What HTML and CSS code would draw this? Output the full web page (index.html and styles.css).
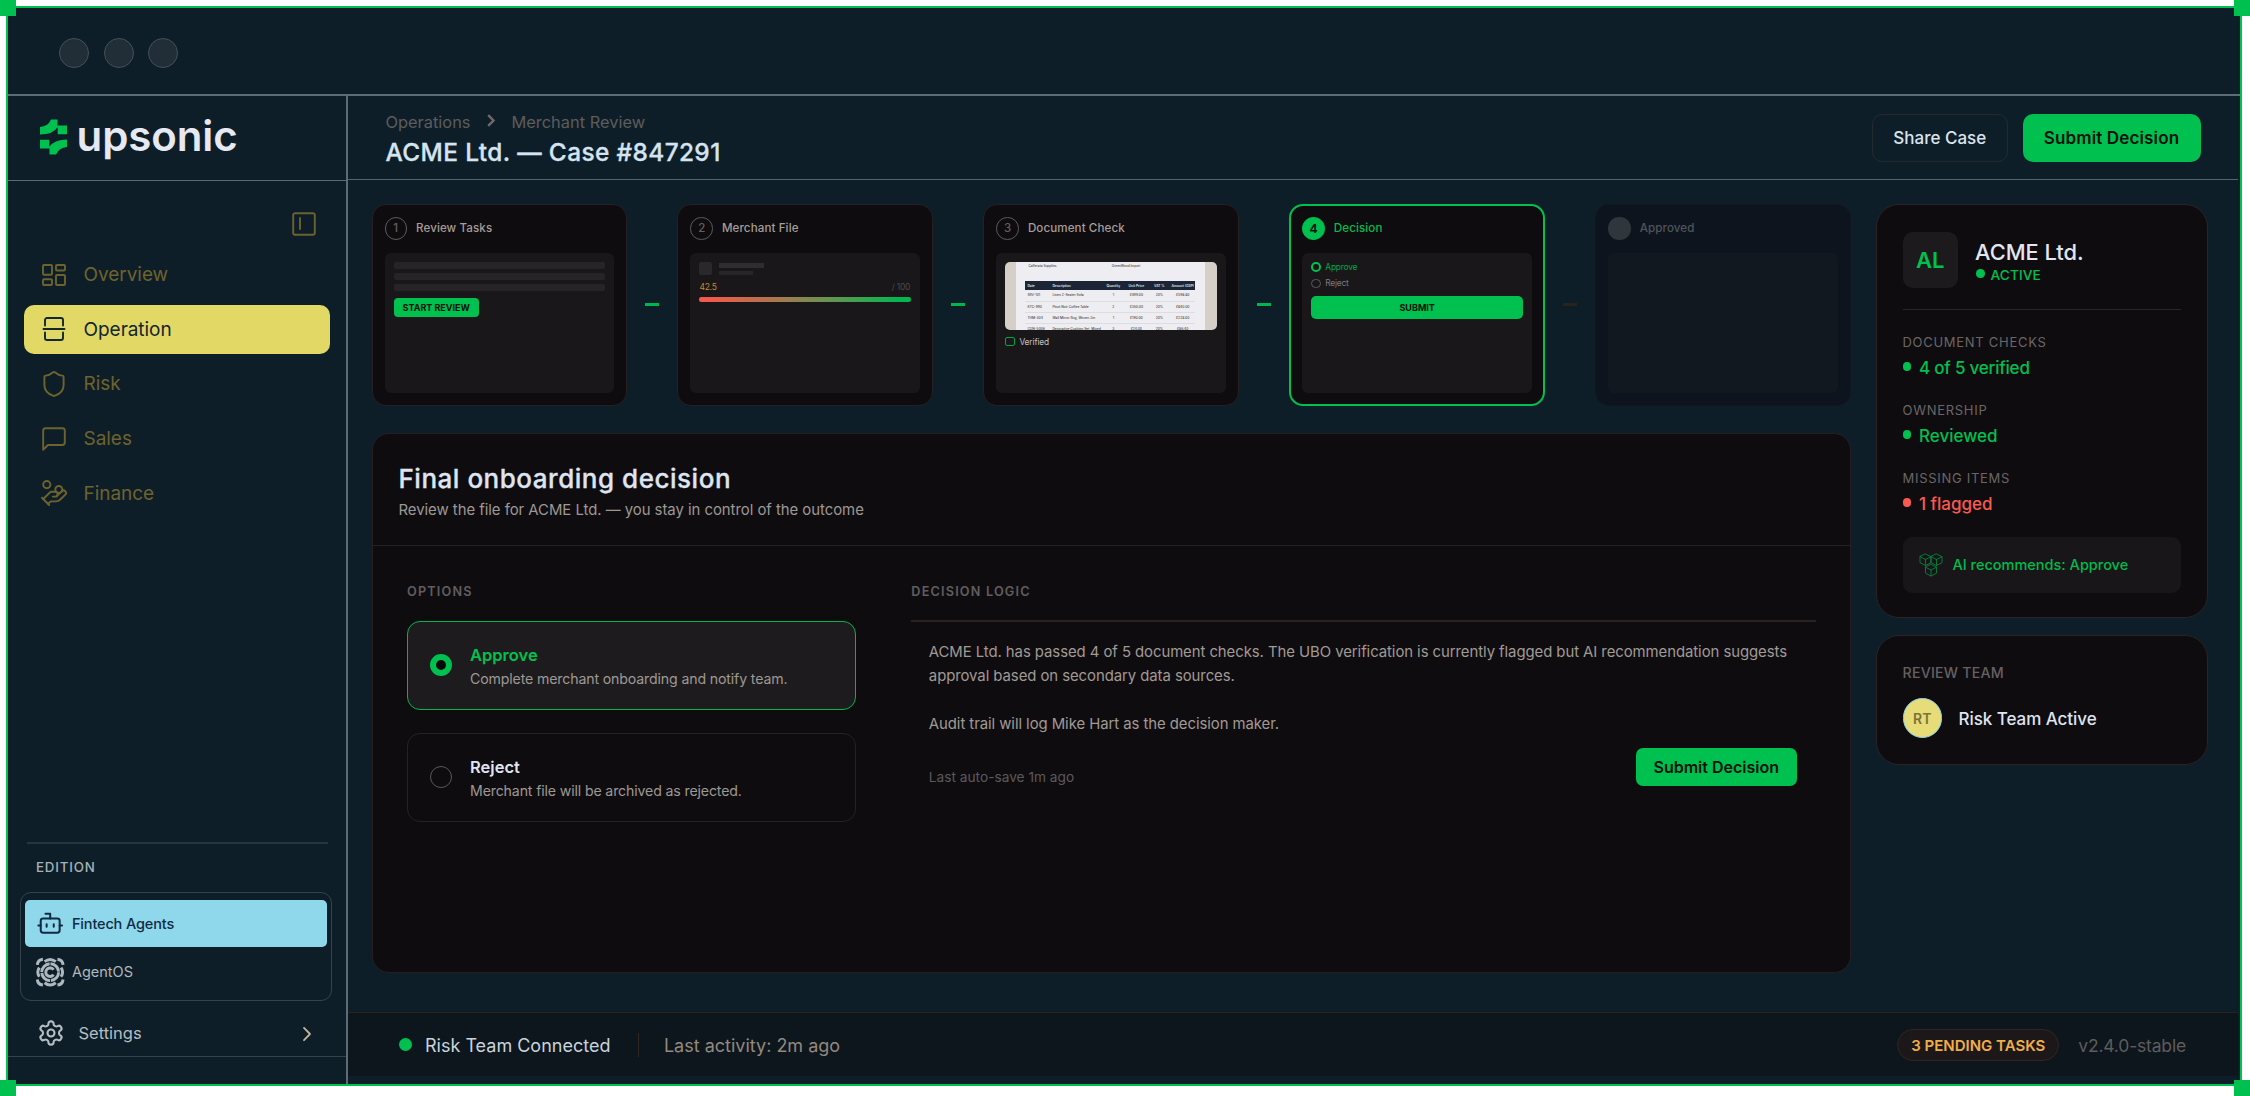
FILE: index.html
```html
<!DOCTYPE html>
<html lang="en">
<head>
<meta charset="utf-8">
<title>Upsonic — Case #847291</title>
<link rel="stylesheet" href="styles.css">
</head>
<body>
<div class="frame">
  <i class="handle tl"></i><i class="handle tr"></i><i class="handle bl"></i><i class="handle br"></i>
  <div class="chrome"><i></i><i></i><i></i></div>
  <div class="app">
    <aside class="sidebar">
      <div class="logo">
        <svg width="27" height="36" viewBox="0 0 27 36"><path fill="#00c04f" d="M0 8Q8 7.5 11 .5H17.5V6.5H27V15.3H17.7V8Q13 15.5 0 15.5ZM27 28Q19 28.5 16 35.5H9.5V29.5H0V20.7H9.3V28Q14 20.5 27 20.5Z"/></svg>
        <span>upsonic</span>
      </div>
      <div class="toggle">
        <svg width="24" height="24" viewBox="0 0 24 24"><rect x="1.2" y="1.2" width="21.6" height="21.6" rx="2"/><path d="M8 6v11"/></svg>
      </div>
      <nav class="nav">
        <a><svg viewBox="0 0 24 24"><rect x="1" y="2" width="9" height="9.7" rx="1"/><rect x="14" y="2" width="9" height="5.5" rx="1"/><rect x="14" y="12" width="9" height="10" rx="1"/><rect x="1" y="16.3" width="9" height="5.7" rx="1"/></svg>Overview</a>
        <a class="on"><svg viewBox="0 0 24 24"><path d="M3 8.500V3a2 2 0 0 1 2-2h14a2 2 0 0 1 2 2v5.500M1.500 12h21M3 15.500V21a2 2 0 0 0 2 2h14a2 2 0 0 0 2-2v-5.500"/></svg>Operation</a>
        <a><svg class="l" viewBox="2 2 20 20"><path d="M20 13c0 5-3.500 7.500-7.660 8.950a1 1 0 0 1-.67-.01C7.500 20.500 4 18 4 13V6a1 1 0 0 1 1-1c2 0 4.500-1.200 6.240-2.720a1.170 1.170 0 0 1 1.520 0C14.510 3.810 17 5 19 5a1 1 0 0 1 1 1z"/></svg>Risk</a>
        <a><svg class="l" viewBox="2 2 20 20"><path d="M21 15a2 2 0 0 1-2 2H7l-4 4V5a2 2 0 0 1 2-2h14a2 2 0 0 1 2 2z"/></svg>Sales</a>
        <a><svg class="l" viewBox="2 2 20 20"><path d="M11 15h2a2 2 0 1 0 0-4h-3c-.6 0-1.100.2-1.400.6L3 17"/><path d="m7 21 1.600-1.400c.3-.4.8-.6 1.400-.6h4c1.100 0 2.100-.4 2.800-1.200l4.600-4.400a2 2 0 0 0-2.750-2.910l-4.200 3.900"/><path d="m2 16 6 6"/><circle cx="16" cy="9" r="2.900"/><circle cx="6" cy="5" r="3"/></svg>Finance</a>
      </nav>
      <div class="side-foot">
        <div class="edition">EDITION</div>
        <div class="switch">
          <a class="on"><svg viewBox="0 0 24 24"><path d="M12 8V4H8"/><rect width="16" height="12" x="4" y="8" rx="2"/><path d="M2 14h2M20 14h2M15 13v2M9 13v2"/></svg>Fintech Agents</a>
          <a><svg class="os" viewBox="0 0 28 28"><path d="M17.300 11.600a4.200 4.200 0 1 0 0 4.800"/><circle cx="14" cy="14" r="8.300" stroke-dasharray="12.150 .89"/><path d="M8.500 3.600Q14-.8 19.500 3.600M8.500 24.400Q14 28.800 19.500 24.400M3.300 9.500Q.2 14 3.300 18.500M24.700 9.500Q27.800 14 24.700 18.500"/><path d="M1.300 6.800Q1.800 1.800 6.800 1.300M21.200 1.300Q26.200 1.800 26.700 6.800M26.700 21.200Q26.200 26.200 21.200 26.700M6.800 26.700Q1.800 26.200 1.300 21.200"/></svg>AgentOS</a>
        </div>
        <div class="settings">
          <svg width="28" height="28" viewBox="0 0 24 24"><path d="M12.220 2h-.44a2 2 0 0 0-2 2v.18a2 2 0 0 1-1 1.730l-.43.25a2 2 0 0 1-2 0l-.15-.08a2 2 0 0 0-2.730.73l-.22.38a2 2 0 0 0 .73 2.730l.15.1a2 2 0 0 1 1 1.720v.51a2 2 0 0 1-1 1.740l-.15.09a2 2 0 0 0-.73 2.730l.22.38a2 2 0 0 0 2.730.73l.15-.08a2 2 0 0 1 2 0l.43.25a2 2 0 0 1 1 1.730V20a2 2 0 0 0 2 2h.44a2 2 0 0 0 2-2v-.18a2 2 0 0 1 1-1.730l.43-.25a2 2 0 0 1 2 0l.15.08a2 2 0 0 0 2.730-.73l.22-.39a2 2 0 0 0-.73-2.730l-.15-.08a2 2 0 0 1-1-1.740v-.5a2 2 0 0 1 1-1.740l.15-.09a2 2 0 0 0 .73-2.730l-.22-.38a2 2 0 0 0-2.730-.73l-.15.08a2 2 0 0 1-2 0l-.43-.25a2 2 0 0 1-1-1.730V4a2 2 0 0 0-2-2z"/><circle cx="12" cy="12" r="3"/></svg>
          <span>Settings</span>
          <svg class="chev" width="8" height="14" viewBox="0 0 8 14"><path d="M1 .8 7 7l-6 6.200"/></svg>
        </div>
      </div>
    </aside>

    <main class="main">
      <header class="top">
        <div class="heading">
          <div class="crumbs"><span>Operations</span><svg width="8" height="13" viewBox="0 0 8 13"><path d="M1.200 1.200 6.500 6.500l-5.300 5.300"/></svg><span>Merchant Review</span></div>
          <h1>ACME Ltd. — Case #847291</h1>
        </div>
        <button class="btn ghost">Share Case</button>
        <button class="btn">Submit Decision</button>
      </header>

      <div class="content">
        <div class="work">
          <div class="steps">
            <section class="step">
              <h3><b>1</b>Review Tasks</h3>
              <div class="thumb"><div class="bars"><i></i><i></i><i></i></div><span class="mini start">START REVIEW</span></div>
            </section>
            <i class="link"></i>
            <section class="step">
              <h3><b>2</b>Merchant File</h3>
              <div class="thumb">
                <div class="who"><i class="sq"></i><div><i></i><i></i></div></div>
                <div class="score"><span>42.5</span><span>/ 100</span></div>
                <div class="meter"></div>
              </div>
            </section>
            <i class="link"></i>
            <section class="step">
              <h3><b>3</b>Document Check</h3>
              <div class="thumb">
                <div class="photo"><div class="paper">
                  <div class="meta"><span>Cafferata Supplies</span><span>GreenWood Import</span></div>
                  <table>
                    <tr><th>Date</th><th>Description</th><th>Quantity</th><th>Unit Price</th><th>VAT %</th><th>Amount (GBP)</th></tr>
                    <tr><td>SRV-101</td><td>Linen 2-Seater Sofa</td><td>1</td><td>£499.00</td><td>20%</td><td>£598.80</td></tr>
                    <tr><td>KTC-990</td><td>Pinot Noir Coffee Table</td><td>2</td><td>£350.00</td><td>20%</td><td>£840.00</td></tr>
                    <tr><td>THM-304</td><td>Wall Mirror Rug, Woven 2m</td><td>1</td><td>£190.00</td><td>20%</td><td>£228.00</td></tr>
                    <tr><td>CON-5006</td><td>Decorative Cushion Set, Mixed</td><td>3</td><td>£24.00</td><td>20%</td><td>£86.40</td></tr>
                  </table>
                </div></div>
                <div class="check"><i></i>Verified</div>
              </div>
            </section>
            <i class="link"></i>
            <section class="step active">
              <h3><b>4</b>Decision</h3>
              <div class="thumb">
                <div class="pick yes"><i></i>Approve</div>
                <div class="pick"><i></i>Reject</div>
                <span class="mini submit">SUBMIT</span>
              </div>
            </section>
            <i class="link off"></i>
            <section class="step off">
              <h3><b></b>Approved</h3>
              <div class="thumb"></div>
            </section>
          </div>

          <section class="panel">
            <div class="panel-head">
              <h2>Final onboarding decision</h2>
              <p>Review the file for ACME Ltd. — you stay in control of the outcome</p>
            </div>
            <div class="panel-body">
              <div class="options">
                <div class="label">OPTIONS</div>
                <div class="option sel"><i></i><div><strong>Approve</strong><p>Complete merchant onboarding and notify team.</p></div></div>
                <div class="option"><i></i><div><strong>Reject</strong><p>Merchant file will be archived as rejected.</p></div></div>
              </div>
              <div class="logic">
                <div class="label">DECISION LOGIC</div>
                <div class="logic-box">
                  <p>ACME Ltd. has passed 4 of 5 document checks. The UBO verification is currently flagged but AI recommendation suggests<br>approval based on secondary data sources.</p>
                  <p>Audit trail will log Mike Hart as the decision maker.</p>
                  <div class="logic-foot"><span>Last auto-save 1m ago</span><button class="btn small">Submit Decision</button></div>
                </div>
              </div>
            </div>
          </section>
        </div>

        <aside class="info">
          <section class="card merchant">
            <div class="id">
              <div class="badge">AL</div>
              <div><div class="name">ACME Ltd.</div><div class="state"><i></i>ACTIVE</div></div>
            </div>
            <dl>
              <div><dt>DOCUMENT CHECKS</dt><dd class="tight"><i></i>4 of 5 verified</dd></div>
              <div><dt>OWNERSHIP</dt><dd><i></i>Reviewed</dd></div>
              <div><dt>MISSING ITEMS</dt><dd class="bad"><i></i>1 flagged</dd></div>
            </dl>
            <div class="ai">
              <svg width="24" height="24" viewBox="0 0 24 24"><path d="M6.500 1l5.500 2.700v6L6.500 12.500 1 9.700v-6zM1 3.700l5.500 2.800L12 3.700M6.500 6.500v6M17.500 1 23 3.700v6l-5.500 2.800L12 9.700v-6zM12 3.700l5.500 2.800L23 3.700M17.500 6.500v6M12 11.500l5.500 2.700v6L12 23l-5.500-2.800v-6zM6.500 14.200 12 17l5.500-2.800M12 17v6"/></svg>
              AI recommends: Approve
            </div>
          </section>
          <section class="card team">
            <div class="team-label">REVIEW TEAM</div>
            <div class="member"><i>RT</i><span>Risk Team Active</span></div>
          </section>
        </aside>
      </div>

      <footer class="status">
        <i class="dot"></i><span class="conn">Risk Team Connected</span><i class="sep"></i><span class="act">Last activity: 2m ago</span>
        <span class="pending">3 PENDING TASKS</span><span class="ver">v2.4.0-stable</span>
      </footer>
    </main>
  </div>
</div>
</body>
</html>
```
FILE: styles.css
```css
* { box-sizing: border-box; margin: 0; padding: 0; }
body { width: 2250px; height: 1096px; overflow: hidden; background: #fff; font-family: Inter, "Liberation Sans", sans-serif; color: #dbe4ee; }
i { font-style: normal; display: block; flex: none; }
svg { display: block; flex: none; fill: none; stroke: currentColor; stroke-linecap: round; stroke-linejoin: round; overflow: visible; }
a { white-space: nowrap; }

.frame { position: relative; width: 2236px; height: 1080px; margin: 6px 0 0 6px; border: 2px solid #00c04f; background: #0e1e28; display: flex; flex-direction: column; }
.handle { position: absolute; width: 16px; height: 16px; background: #00c04f; z-index: 2; }
.tl { left: -8px; top: -8px; }
.tr { right: -10px; top: -8px; }
.bl { left: -8px; bottom: -12px; }
.br { right: -10px; bottom: -12px; }

.chrome { flex: none; height: 88px; border-bottom: 2px solid #5c6b74; display: flex; align-items: center; gap: 14.7px; padding: 4px 0 0 51px; }
.chrome i { width: 30px; height: 30px; border-radius: 50%; background: #212e38; border: 1px solid #44505a; }

.app { flex: 1; display: flex; min-height: 0; }

/* Sidebar */
.sidebar { width: 340px; border-right: 2px solid #5c6b74; display: flex; flex-direction: column; }
.logo { height: 85px; border-bottom: 1px solid #5c6b74; padding: 0 0 2px 32px; display: flex; align-items: center; gap: 9.5px; }
.logo svg { stroke: none; }
.logo span { font-size: 42px; font-weight: 600; line-height: 42px; letter-spacing: -.002em; color: #e6e9f2; margin-top: -3px; }
.toggle { height: 69px; padding: 16px 30px 0 0; display: flex; justify-content: flex-end; align-items: center; color: #6d622f; }
.toggle svg { stroke-width: 1.9; }
.nav { display: flex; flex-direction: column; gap: 5px; padding: 0 16px; }
.nav a { height: 49.6px; border-radius: 10px; padding-left: 18px; display: flex; align-items: center; gap: 17.5px; font-size: 19px; letter-spacing: -.002em; color: #6d632f; }
.nav svg { width: 24px; height: 24px; stroke-width: 1.9; }
.nav svg.l { stroke-width: 1.6; }
.nav .on { background: #e2d866; color: #14262e; }
.side-foot { margin-top: auto; }
.edition { margin: 0 18px 0 19px; border-top: 2px solid #26363f; height: 50px; padding-left: 9px; line-height: 47px; font-size: 13.3px; font-weight: 500; letter-spacing: .062em; color: #a7b2b8; }
.switch { margin: 0 14px 0 12px; height: 109px; border: 1px solid #34434d; border-radius: 11px; padding: 7px 4px 0; }
.switch a { display: flex; align-items: center; height: 50.5px; padding-left: 10.5px; gap: 8px; font-size: 14.5px; color: #aeb8bf; }
.switch svg { width: 28.4px; height: 28.4px; stroke-width: 1.7; }
.switch .on { height: 46.5px; border-radius: 5px; background: #8fd7eb; color: #0f2b44; font-weight: 500; letter-spacing: -.01em; }
.switch .os { stroke-width: 2.9; stroke-linecap: butt; }
.settings { display: flex; align-items: center; height: 56px; padding: 8px 35px 0 29px; border-bottom: 1px solid #34434d; margin-bottom: 27px; color: #b4bdc3; font-size: 16.5px; }
.settings span { margin: 0 auto 0 13.5px; }
.settings svg { stroke-width: 1.8; }
.settings .chev { color: #c4b29b; margin-top: 2px; }

/* Header */
.main { flex: 1; min-width: 0; display: flex; flex-direction: column; }
.top { height: 84px; flex: none; border-bottom: 1px solid #56646d; padding: 16px 37.5px 0 37.5px; display: flex; align-items: flex-start; gap: 15px; margin-right: 2px; }
.heading { margin-right: auto; }
.crumbs { display: flex; align-items: center; gap: 16.5px; font-size: 16.4px; line-height: 20px; color: #5d5c5e; }
.crumbs svg { stroke-width: 2.4; color: #706a6b; stroke-linecap: butt; stroke-linejoin: miter; margin-top: -3px; }
h1 { margin-top: 4.5px; font-size: 24.4px; font-weight: 500; line-height: 30px; letter-spacing: .016em; color: #d5e4f0; -webkit-text-stroke: .3px #d5e4f0; }
.btn { font: 600 17px/1 Inter, sans-serif; border: 0; background: #00c04f; color: #04120a; border-radius: 10px; height: 48px; width: 178px; margin-top: 2px; letter-spacing: .008em; text-align: center; padding-top: 1px; }
.btn.ghost { width: 135.5px; background: none; border: 1px solid #232a2d; color: #dbe4ee; font-weight: 500; letter-spacing: 0; }
.btn.small { width: 161.5px; height: 38.5px; border-radius: 7px; font-size: 16px; letter-spacing: 0; margin: 0; }

/* Steps */
.content { flex: 1; display: flex; gap: 24.5px; padding: 23.5px 32px 0 23.5px; }
.work { width: 1479.5px; }
.steps { display: flex; align-items: center; height: 202.5px; }
.step { width: 255.7px; height: 202.5px; border: 1px solid #252021; border-radius: 14px; background: #0f0c0f; padding: 12.5px 12px 0; }
.step h3 { display: flex; align-items: center; gap: 9px; font-size: 11.6px; font-weight: 500; line-height: 22px; height: 22.5px; letter-spacing: .008em; color: #a59e9a; }
.step h3 b { width: 22.5px; height: 22.5px; border-radius: 50%; border: 1.3px solid #5e5b5d; color: #625f61; text-align: center; line-height: 21px; font-weight: 500; font-size: 11.5px; letter-spacing: 0; }
.thumb { margin-top: 13.5px; height: 139.5px; border-radius: 6px; background: #191719; padding: 9px; }
.link { width: 50.25px; padding: 0 18.1px; }
.link::before { content: ""; display: block; height: 3px; background: #00b64c; }
.link.off::before { background: #29221f; }
.step.active { border: 2px solid #00c04f; padding: 11.5px 11px 0; }
.active h3 { color: #00bd4e; }
.step.active h3 b { background: #00c04f; border-color: #00c04f; color: #07150c; font-weight: 700; font-size: 12px; }
.step.off { background: #0e141d; border-color: #111720; }
.step.off h3 { color: #4e545b; }
.step.off h3 b { background: #2f363c; border: 0; }
.step.off .thumb { background: #121820; }
.bars { display: flex; flex-direction: column; gap: 4px; margin-bottom: 7px; }
.bars i { height: 7px; border-radius: 2px; background: #262427; }
.mini { display: block; background: #00c04f; color: #04120a; border-radius: 4px; font-size: 9px; font-weight: 700; text-align: center; }
.start { width: 85.5px; height: 19px; line-height: 19px; }
.submit { height: 23.5px; line-height: 23.5px; margin-top: 7.5px; border-radius: 5px; }
.who { display: flex; gap: 7px; }
.who .sq { width: 13px; height: 13px; border-radius: 2px; background: #2a282b; }
.who div { display: flex; flex-direction: column; gap: 2.5px; padding-top: 1px; }
.who div i { width: 45px; height: 5px; background: #2f2d30; }
.who div i + i { width: 34px; height: 4px; background: #272528; }
.score { display: flex; justify-content: space-between; font-size: 8.5px; letter-spacing: -.03em; line-height: 12px; height: 12px; margin: 6px 1px 4px 0; color: #c58b2f; }
.score span + span { color: #4c494c; }
.meter { height: 4.5px; border-radius: 2.2px; background: linear-gradient(90deg, #f5584c 4%, #b5724c 32%, #6f9150 58%, #00b84e 96%); }
.photo { height: 67.5px; border-radius: 5px; background: #d5cfc7; overflow: hidden; padding: 0 12px 0 11px; }
.paper { background: #eeeef2; height: 67.5px; overflow: hidden; padding: 0 10px 0 9px; }
.meta { display: flex; height: 19px; font-size: 3.2px; line-height: 8px; font-weight: 500; padding-left: 3px; color: #444; }
.meta span { width: 109px; }
.paper table { width: 100%; border-collapse: collapse; table-layout: fixed; font-size: 3.3px; line-height: 8px; color: #444; white-space: nowrap; }
.paper th { background: #1b2536; color: #dfe4ee; text-align: center; height: 9px; font-weight: 600; }
.paper td { height: 11px; text-align: center; border-bottom: .5px solid #dcdce2; font-weight: 500; }
.paper th:nth-child(-n+2), .paper td:nth-child(-n+2) { text-align: left; padding-left: 2px; }
.paper th:nth-child(1) { width: 25px; }
.paper th:nth-child(2) { width: 52px; }
.paper th:nth-child(3) { width: 22px; }
.paper th:nth-child(4) { width: 24px; }
.paper th:nth-child(5) { width: 22px; }
.check { display: flex; align-items: center; gap: 4.5px; font-size: 8.3px; letter-spacing: -.01em; line-height: 12px; margin-top: 6px; color: #c5c4cc; }
.check i { width: 9.5px; height: 9.5px; border: 1.2px solid #00a546; border-radius: 2px; }
.pick { display: flex; align-items: center; gap: 4.5px; height: 9.5px; margin-bottom: 7px; font-size: 8.4px; letter-spacing: -.025em; color: #7d7a7c; }
.pick i { width: 9.5px; height: 9.5px; border: 1.3px solid #5d5a5d; border-radius: 50%; }
.pick.yes { color: #00a848; }
.pick.yes i { border: 2.8px solid #00c04f; }

/* Decision panel */
.panel { margin-top: 27px; height: 540px; border: 1px solid #25201f; border-radius: 17px; background: #0f0c0f; }
.panel-head { height: 111.5px; border-bottom: 1px solid #26221e; padding: 29px 0 0 26px; }
h2 { font-size: 26px; line-height: 32px; font-weight: 500; letter-spacing: .02em; color: #dfe5f0; -webkit-text-stroke: .3px #dfe5f0; }
.panel-head p { margin-top: 4px; font-size: 14.9px; line-height: 22px; color: #9d9894; letter-spacing: -.002em; }
.panel-body { display: flex; gap: 55px; padding: 38px 34.5px 0; }
.options { width: 449.5px; }
.logic { width: 904.5px; }
.label { font-size: 12.7px; line-height: 16px; font-weight: 600; letter-spacing: .092em; color: #605d60; }
.option { height: 89px; border: 1px solid #252220; border-radius: 13px; margin-top: 23px; padding: 2px 0 0 21.5px; display: flex; align-items: center; gap: 18px; }
.option i { width: 22.5px; height: 22.5px; border-radius: 50%; border: 1.3px solid #5a575a; margin-top: -2px; }
.option strong { display: block; font-size: 16.5px; line-height: 22px; font-weight: 600; color: #dfe5f0; }
.option p { margin-top: 3px; font-size: 14.15px; line-height: 20px; letter-spacing: -.01em; color: #9d9894; }
.option.sel { margin-top: 21px; background: #1d1b1d; border-color: #00b64c; }
.sel i { border: 6.7px solid #00c04f; background: #0a0a0a; }
.sel strong { color: #00c04f; }
.logic-box { margin-top: 20.5px; border-top: 2.5px solid #2a221c; padding: 17.5px 18.5px 0 17.5px; }
.logic-box p { font-size: 14.9px; line-height: 24px; color: #a09a95; margin-bottom: 24px; white-space: nowrap; letter-spacing: -.004em; }
.logic-foot { display: flex; justify-content: space-between; align-items: flex-end; margin-top: -12px; font-size: 13.7px; line-height: 17px; color: #5c595b; }

/* Info column */
.info { width: 332.5px; }
.card { border: 1px solid #2a2422; border-radius: 23px; background: #0f0c0f; padding: 0 26px; }
.merchant { height: 414.5px; padding-top: 27px; }
.id { display: flex; gap: 17px; padding-bottom: 21px; border-bottom: 1px solid #2b2523; }
.badge { width: 55.5px; height: 56px; border-radius: 10px; background: #1c1a1c; color: #00c04f; font-size: 22px; font-weight: 600; text-align: center; line-height: 57px; }
.name { margin-top: 7px; font-size: 21.8px; font-weight: 500; line-height: 26px; color: #e1e6f0; }
.state { display: flex; align-items: center; gap: 6px; margin: 1px 0 0 1px; font-size: 13.7px; line-height: 18px; font-weight: 500; letter-spacing: .005em; color: #00c04f; }
.state i, dd i { width: 8.5px; height: 8.5px; border-radius: 50%; background: currentColor; margin-top: -2px; }
dl { padding-top: 23px; }
dl > div { margin-bottom: 21px; }
dt { font-size: 13px; line-height: 18px; letter-spacing: .055em; color: #6a6667; }
dd { margin-top: 5px; display: flex; align-items: center; gap: 8px; font-size: 17px; line-height: 24px; font-weight: 450; color: #00c04f; }
dd.tight { letter-spacing: -.012em; }
dd.bad { color: #fa5a4f; }
.ai { height: 56px; border-radius: 9px; background: #181619; display: flex; align-items: center; gap: 10px; padding-left: 16px; color: #00bb4d; font-size: 14.5px; font-weight: 500; }
.ai svg { stroke-width: .8; color: #008f40; }
.team { margin-top: 16.5px; height: 130.5px; padding-top: 28.5px; }
.team-label { font-size: 14.2px; font-weight: 500; line-height: 18px; letter-spacing: .015em; color: #656163; }
.member { display: flex; align-items: center; gap: 16.5px; margin-top: 16px; font-size: 17px; color: #dfe5f0; font-weight: 450; }
.member span { padding-top: 3px; letter-spacing: -.003em; }
.member i { width: 39.5px; height: 39.5px; border-radius: 50%; background: #e6dc78; border: 1.3px solid #8fd7eb; color: #7a7238; font-size: 14px; font-weight: 600; text-align: center; line-height: 39px; }

/* Status bar */
.status { height: 64px; flex: none; margin: 0 2px 8px 0; border-top: 1px solid #29221f; background: #0c161c; display: flex; align-items: center; padding: 1px 52px 0 51px; font-size: 18px; }
.dot { width: 13px; height: 13px; border-radius: 50%; background: #00c04f; margin-top: -2px; }
.conn { margin-left: 13px; color: #c9d3dc; }
.sep { width: 1px; height: 24px; background: #33251f; margin: 0 25px 0 27.500px; }
.act { color: #94887f; margin-right: auto; }
.pending { height: 32.5px; width: 162px; text-align: center; line-height: 31px; border-radius: 17px; background: #1c181a; border: 1px solid #33241e; font-size: 15px; font-weight: 600; color: #f0ae48; }
.ver { margin-left: 19px; color: #5f5c5c; font-size: 17.5px; letter-spacing: -.01em; }
```
